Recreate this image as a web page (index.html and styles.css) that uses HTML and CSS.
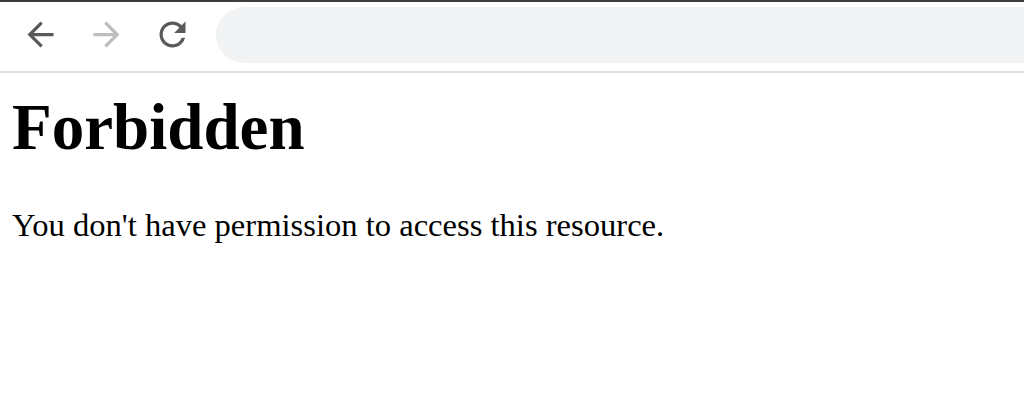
FILE: index.html
```html
<!DOCTYPE html>
<html lang="en">
<head>
<meta charset="utf-8">
<title>403 Forbidden</title>
<link rel="stylesheet" href="styles.css">
</head>
<body>
<div class="toolbar">
  <span class="icon icon-back">
    <svg viewBox="0 0 24 24" width="39" height="39"><path d="M20 11H7.83l5.59-5.59L12 4l-8 8 8 8 1.41-1.41L7.83 13H20v-2z"/></svg>
  </span>
  <span class="icon icon-forward">
    <svg viewBox="0 0 24 24" width="39" height="39"><path d="M12 4l-1.41 1.41L16.17 11H4v2h12.170l-5.58 5.59L12 20l8-8z"/></svg>
  </span>
  <span class="icon icon-reload">
    <svg viewBox="0 0 24 24" width="39" height="39"><path d="M17.65 6.35C16.2 4.9 14.21 4 12 4c-4.42 0-7.99 3.58-7.99 8s3.57 8 7.99 8c3.73 0 6.84-2.55 7.73-6h-2.08c-.82 2.33-3.04 4-5.65 4-3.31 0-6-2.69-6-6s2.69-6 6-6c1.66 0 3.14.69 4.22 1.78L13 11h7V4l-2.35 2.35z"/></svg>
  </span>
  <div class="urlbar"></div>
</div>
<main class="content">
  <h1 class="title">Forbidden</h1>
  <p class="message">You don't have permission to access this resource.</p>
</main>
</body>
</html>
```
FILE: styles.css
```css
html, body {
  margin: 0;
  padding: 0;
  background: #ffffff;
}
body {
  font-family: "Liberation Serif", "Times New Roman", serif;
  color: #000000;
}
.toolbar {
  display: flex;
  align-items: flex-start;
  height: 64px;
  box-sizing: content-box;
  padding: 5px 0 0 21px;
  margin: 0;
  border-top: 2px solid #3c3c3c;
  border-bottom: 2px solid #dfe0e2;
  background: #ffffff;
  overflow: hidden;
}
.icon {
  display: block;
  width: 39px;
  height: 39px;
  margin-top: 8px;
  margin-right: 27px;
  flex: none;
}
.icon svg { display: block; }
.icon-back svg, .icon-reload svg { fill: #58595b; }
.icon-forward svg { fill: #bdbdbd; }
.icon-reload { margin-right: 23.5px; }
.urlbar {
  flex: 1;
  height: 56px;
  background: #f1f3f4;
  border-radius: 28px 0 0 28px;
}
.content {
  padding: 17px 12px 0 12px;
}
.title {
  margin: 0;
  font-size: 65px;
  font-weight: bold;
  line-height: normal;
}
.message {
  margin: 42px 0 0 0;
  font-size: 32.6px;
  line-height: normal;
}
```
